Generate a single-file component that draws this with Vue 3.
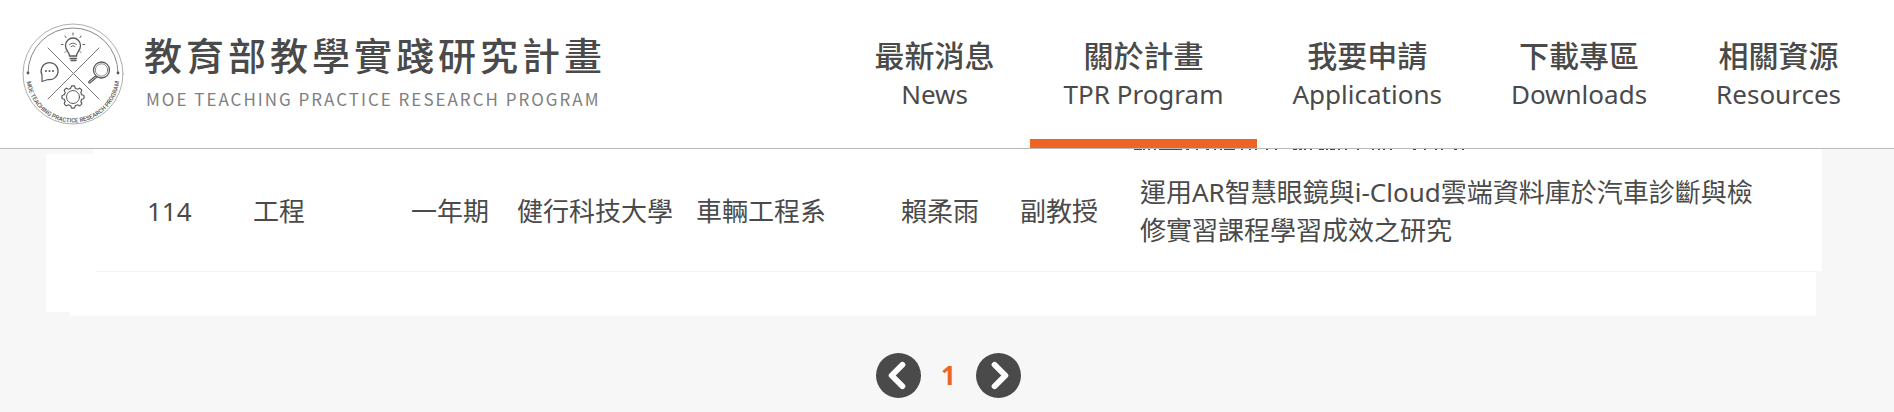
<script setup>
const nav = [
  { zh: '最新消息', en: 'News' },
  { zh: '關於計畫', en: 'TPR Program', active: true },
  { zh: '我要申請', en: 'Applications' },
  { zh: '下載專區', en: 'Downloads' },
  { zh: '相關資源', en: 'Resources' },
]
const row = ['114', '工程', '一年期', '健行科技大學', '車輛工程系', '賴柔雨', '副教授', '運用AR智慧眼鏡與i-Cloud雲端資料庫於汽車診斷與檢修實習課程學習成效之研究']

// Gear outline with eight rounded teeth
const gear = Array.from({ length: 96 }, (_, i) => {
  const a = (i / 96) * Math.PI * 2
  const r = 10 + 1.1 * Math.tanh(3 * Math.cos(8 * a))
  return `${(51 + r * Math.sin(a)).toFixed(2)},${(74 - r * Math.cos(a)).toFixed(2)}`
}).join(' ')

// Stroke feet of the row above that peek out from under the header: [start, length]
const feet = [
  [0, 8], [9, 2], [14, 2], [20, 2], [25, 23], [52, 3], [62, 2], [72, 3], [80, 2], [86, 2], [90, 11], [107, 2],
  [115, 2], [121, 2], [132, 2], [141, 2], [159, 4], [165, 3], [170, 2], [176, 2], [185, 5], [192, 2], [196, 5],
  [204, 2], [211, 2], [223, 2], [238, 2], [244, 2], [249, 2], [256, 2], [279, 3], [290, 2], [301, 2], [307, 2],
  [320, 3], [328, 2],
]
const feetPath = feet.map(([x, w]) => `M${x} 0.5h${w}`).join('')
</script>

<template>
  <div class="page">
    <header class="header">
      <a class="brand" href="#" aria-label="教育部教學實踐研究計畫">
        <svg class="seal" viewBox="0 0 102 102" aria-hidden="true">
          <defs><path id="seal-arc" d="M4.500 53 A46.500 46.500 0 0 0 97.500 53" /></defs>
          <g fill="none" stroke="#5a5a5a" stroke-width="1" stroke-linecap="round">
            <circle cx="51" cy="51" r="50" stroke="#999" stroke-width=".8" />
            <path d="M6 50 A45 45 0 0 1 96 50" stroke="#888" />
            <path d="M26 25 L77 76 M77 25 L26 76" stroke="#777" />
            <path d="M47.5 33 C47.5 29 43.5 28 43.5 22.500 A7.500 7.500 0 0 1 58.500 22.500 C58.500 28 54.500 29 54.500 33 Z M48 35.500 H54.500 M49 37.500 H54" stroke-width="1.300" />
            <path d="M47.500 21.500 Q51 18.500 54.500 21.500 M49 23.500 Q51 21.500 53 23.500" stroke-width=".9" />
            <path d="M51 10 V12 M43 13 L44 14.500 M59 13 L58 14.500 M39.500 21.500 H41 M61 21.500 H62.500 M43 29.500 L44 28.500 M59 29.500 L58 28.500" />
            <path d="M20 52 A8.500 8.500 0 1 1 26 56.500 L20 58.500 Z" stroke-width="1.200" />
            <circle cx="79.500" cy="47" r="8" stroke-width="1.300" />
            <circle cx="79.500" cy="47" r="6.200" stroke-width=".7" />
            <path d="M73.500 53 L67 58.500 Q66 60 68 60 L75 54" stroke-width="1.200" />
            <polygon :points="gear" stroke-width="1.200" />
            <circle cx="51" cy="74" r="6.500" />
          </g>
          <g fill="#555">
            <circle cx="6" cy="50" r="1.400" /><circle cx="96" cy="50" r="1.400" />
            <circle cx="24" cy="48" r="1" /><circle cx="27.500" cy="48" r="1" /><circle cx="31" cy="48" r="1" />
          </g>
          <text class="seal-text"><textPath href="#seal-arc" startOffset="50%" text-anchor="middle">MOE TEACHING PRACTICE RESEARCH PROGRAM</textPath></text>
        </svg>
        <span class="brand-text">
          <span class="brand-zh">教育部教學實踐研究計畫</span>
          <span class="brand-en">MOE TEACHING PRACTICE RESEARCH PROGRAM</span>
        </span>
      </a>
      <nav class="nav">
        <a v-for="n in nav" :key="n.en" href="#" :class="['item', { active: n.active }]">
          <span class="zh">{{ n.zh }}</span>
          <span class="en">{{ n.en }}</span>
        </a>
      </nav>
    </header>
    <main>
      <section class="panel">
        <table>
          <colgroup>
            <col class="c1" /><col class="c2" /><col class="c3" /><col class="c4" /><col class="c5" /><col class="c6" /><col class="c7" /><col />
          </colgroup>
          <tbody>
            <tr><td v-for="c in row" :key="c">{{ c }}</td></tr>
          </tbody>
        </table>
        <svg class="feet" viewBox="0 0 332 2" aria-hidden="true"><path :d="feetPath" /></svg>
      </section>
      <div class="pager">
        <button type="button" aria-label="Previous page"><svg viewBox="0 0 46 46"><path d="M27 12 L16 23 L27 34" /></svg></button>
        <a href="#" class="current">1</a>
        <button type="button" aria-label="Next page"><svg viewBox="0 0 46 46"><path d="M19 12 L30 23 L19 34" /></svg></button>
      </div>
    </main>
  </div>
</template>

<style>
body { background: #f7f7f7; }
</style>

<style scoped>
.page { font-family: "Noto Sans", "Noto Sans CJK TC", sans-serif; color: #4a4a4a; font-size: 26px; overflow: hidden; }
a { color: inherit; text-decoration: none; }
.header { display: flex; justify-content: space-between; height: 148px; background: #fff; border-bottom: 1px solid #bbb; padding: 0 19px 0 22px; }
.brand { display: flex; gap: 20px; align-items: center; }
.seal { width: 102px; height: 102px; }
.seal-text { font: 500 6px "Roboto", sans-serif; fill: #555; }
.brand-text { display: flex; flex-direction: column; gap: 3px; padding-top: 3px; font-family: "Noto Sans CJK TC", sans-serif; white-space: nowrap; }
.brand-zh { font-size: 38px; line-height: 44px; font-weight: 500; letter-spacing: 4px; }
.brand-en { font-size: 17px; line-height: 40px; letter-spacing: 2px; color: #808080; padding-left: 2px; }
.nav { display: flex; gap: 1px; }
.item { display: flex; flex-direction: column; align-items: center; padding: 36px 34px 0; border-bottom: 9px solid transparent; line-height: 39px; white-space: nowrap; }
.active { border-bottom-color: #ee6425; }
.zh { font-size: 30px; font-weight: 500; }
.panel { position: relative; margin: 0 72px 0 46px; padding: 0 0 44px 50px; background: #fff; clip-path: polygon(47px 0, 100% 0, 100% 122px, calc(100% - 6px) 122px, calc(100% - 6px) 100%, 24px 100%, 24px 163px, 0 163px, 0 5px, 47px 5px); }
.feet { position: absolute; top: 0; left: 1088px; width: 332px; height: 2px; fill: none; stroke: #4a4a4a; }
table { width: 100%; border-collapse: collapse; table-layout: fixed; }
td { height: 122px; padding: 3px 0 0 12px; border-bottom: 1px solid #f3f3f3; line-height: 38px; white-space: nowrap; vertical-align: middle; box-sizing: border-box; }
td:first-child { padding-left: 51px; }
td:last-child { white-space: normal; padding-right: 50px; }
.c1 { width: 145px; }
.c2 { width: 158px; }
.c3 { width: 106px; }
.c4 { width: 179px; }
.c5 { width: 205px; }
.c6 { width: 119px; }
.c7 { width: 120px; }
.pager { display: flex; justify-content: center; align-items: center; gap: 20px; padding: 37px 0 14px 3px; }
button { width: 45px; height: 45px; padding: 0; border: 0; border-radius: 50%; background: #4a4a4a; }
button svg { display: block; fill: none; stroke: #fff; stroke-width: 6; stroke-linecap: round; stroke-linejoin: round; }
.current { color: #ee6425; font-weight: 700; line-height: 38px; }
</style>
